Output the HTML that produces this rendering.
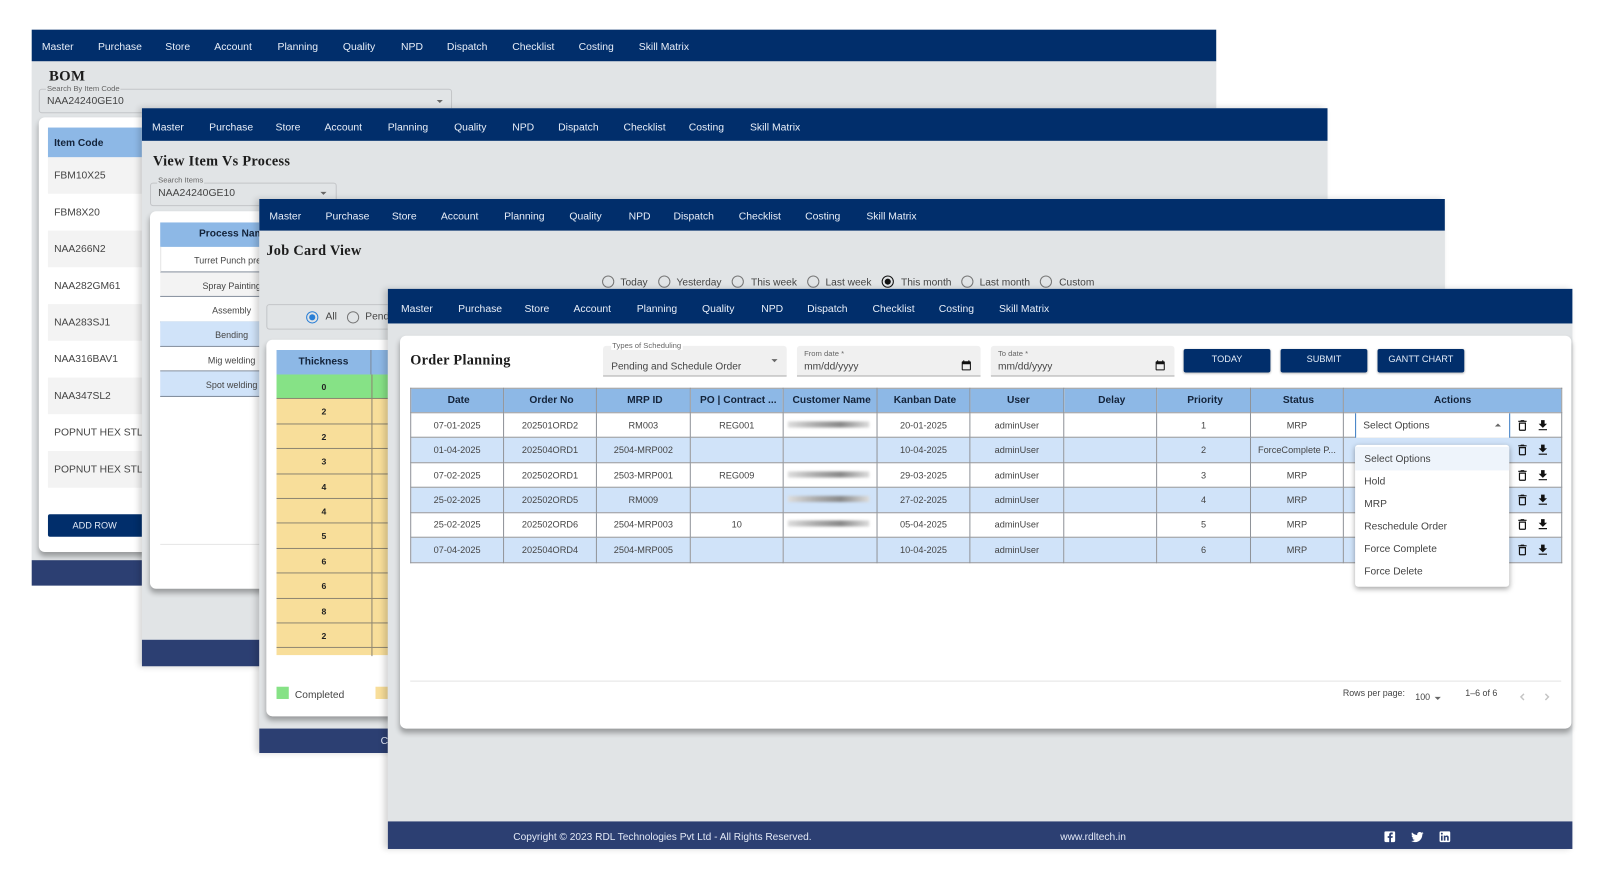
<!DOCTYPE html>
<html><head><meta charset="utf-8"><title>Order Planning</title>
<style>
*{box-sizing:border-box}
html,body{margin:0;padding:0;width:1600px;height:886px;overflow:hidden;background:#fff}
body{font-family:"Liberation Sans",sans-serif;color:#333}
#root{position:absolute;left:0;top:0;width:1568px;height:868.3px;transform:scale(1.0204);transform-origin:0 0;filter:blur(.25px)}
.a{position:absolute;white-space:nowrap;line-height:1}
.win{position:absolute;background:#e1e4e6;overflow:hidden;box-shadow:-3px 0 6px rgba(0,0,0,.18)}
.nav{position:absolute;left:0;top:0;right:0;background:#012e6b}
.nav span{position:absolute;color:#e8eef8;font-size:10.2px;line-height:1;white-space:nowrap}
.nav .i1{left:10px}.nav .i2{left:65px}.nav .i3{left:131px}.nav .i4{left:179px}.nav .i5{left:241px}.nav .i6{left:305px}.nav .i7{left:362px}.nav .i8{left:407px}.nav .i9{left:471px}.nav .i10{left:536px}.nav .i11{left:595px}
.foot{position:absolute;left:0;right:0;background:#2c3f72}
.card{position:absolute;background:#fff;border-radius:6px;box-shadow:0 4px 5px rgba(0,0,0,.32);overflow:hidden}
.ttl{position:absolute;font-family:"Liberation Serif",serif;font-weight:bold;color:#1c1c1c;white-space:nowrap;line-height:1}
.out{position:absolute;border:1px solid #c3c5c8;border-radius:3px}
.lab{position:absolute;font-size:7.5px;color:#666;line-height:1;white-space:nowrap;background:#e1e4e6;padding:0 1px}
.arr{position:absolute;width:0;height:0;border-left:3px solid transparent;border-right:3px solid transparent;border-top:3px solid #666}
.rad{position:absolute;width:12px;height:12px;border:1.2px solid #777;border-radius:50%}
.rl{position:absolute;font-size:10px;line-height:1;color:#444;white-space:nowrap}
.fld{position:absolute;background:#f0f0f0;border-bottom:1px solid #a9a9a9;border-radius:3px 3px 0 0}
.btn{position:absolute;top:342px;height:23px;background:#012e6b;color:#e4ecf8;font-size:9px;line-height:21px;text-align:center;border-radius:2px;box-shadow:0 1px 2px rgba(0,0,0,.3)}
table{border-collapse:collapse;table-layout:fixed;position:absolute}
#ot td,#ot th{border:1px solid #8f9399;height:24.45px;padding:0;text-align:center;font-size:9px;color:#444;white-space:nowrap;overflow:hidden}
#ot th{background:#8db8e6;font-size:10px;color:#13233a;font-weight:bold;padding-left:3px}
#ot th:last-child{padding-left:0}
#ot tr.b td{background:#d0e3f9}
.blr{position:absolute;height:6px;width:80px;background:linear-gradient(90deg,#ddd,#aaa 35%,#888 65%,#ddd);filter:blur(1.2px)}
.ic{position:absolute;width:14px;height:14px;fill:#111}
.tt{position:absolute;left:271px;width:240px;height:24.4px;background:#f8de9a;border-bottom:1px solid #8c8470;font-size:8.5px;font-weight:bold;color:#222}
.tt b{position:absolute;left:0;width:93px;text-align:center;top:8px;line-height:1}
.tt i{position:absolute;left:93px;top:0;bottom:-1px;width:1px;background:#8c8470}
.r1{position:absolute;left:47px;width:100px;height:36px;font-size:10.1px;color:#444;padding-left:6px;line-height:38px;white-space:nowrap}
.r2{position:absolute;left:157px;width:140px;height:24.5px;border-bottom:1px solid #7f8a99;font-size:8.8px;text-align:center;line-height:26px;color:#444}
.mi{position:absolute;left:1337px;font-size:10px;color:#444;line-height:1;white-space:nowrap}
</style></head>
<body><div id="root">
<svg width="0" height="0" style="position:absolute"><defs>
<symbol id="tr" viewBox="0 0 24 24"><path d="M6 19c0 1.1.9 2 2 2h8c1.1 0 2-.9 2-2V7H6v12zM8 9h8v10H8V9zm7.5-5l-1-1h-5l-1 1H5v2h14V4z"/></symbol>
<symbol id="dl" viewBox="0 0 24 24"><path d="M19 9h-4V3H9v6H5l7 7 7-7zM5 18v2h14v-2H5z"/></symbol>
<symbol id="cal" viewBox="0 0 24 24"><path d="M19 4h-1V2h-2v2H8V2H6v2H5c-1.1 0-2 .9-2 2v14c0 1.1.9 2 2 2h14c1.1 0 2-.9 2-2V6c0-1.1-.9-2-2-2zm0 16H5V10h14v10z"/></symbol>
</defs></svg>

<!-- Window 1 -->
<div class="win" style="left:31px;top:29px;width:1161px;height:545px;box-shadow:none">
<div class="nav" style="height:31px"><span class="i1" style="top:13px">Master</span><span class="i2" style="top:13px">Purchase</span><span class="i3" style="top:13px">Store</span><span class="i4" style="top:13px">Account</span><span class="i5" style="top:13px">Planning</span><span class="i6" style="top:13px">Quality</span><span class="i7" style="top:13px">NPD</span><span class="i8" style="top:13px">Dispatch</span><span class="i9" style="top:13px">Checklist</span><span class="i10" style="top:13px">Costing</span><span class="i11" style="top:13px">Skill Matrix</span></div>
<div class="foot" style="top:520px;height:25px"></div>
</div>
<div class="ttl" style="left:48px;top:68px;font-size:14.5px;letter-spacing:.3px">BOM</div>
<div class="out" style="left:38px;top:87px;width:405px;height:24px"></div>
<div class="lab" style="left:45px;top:83px">Search By Item Code</div>
<div class="a" style="left:46px;top:95px;font-size:10.2px;color:#444">NAA24240GE10</div>
<div class="arr" style="left:428px;top:98px"></div>
<div class="card" style="left:38px;top:115px;width:300px;height:426px"></div>
<div class="a" style="left:47px;top:125px;width:100px;height:30px;background:#8db8e6;font-size:10px;font-weight:bold;color:#13233a;line-height:31px;padding-left:6px">Item Code</div>
<div class="r1" style="top:154px;background:#f3f3f3">FBM10X25</div>
<div class="r1" style="top:190px;background:#fff">FBM8X20</div>
<div class="r1" style="top:226px;background:#f3f3f3">NAA266N2</div>
<div class="r1" style="top:262px;background:#fff">NAA282GM61</div>
<div class="r1" style="top:298px;background:#f3f3f3">NAA283SJ1</div>
<div class="r1" style="top:334px;background:#fff">NAA316BAV1</div>
<div class="r1" style="top:370px;background:#f3f3f3">NAA347SL2</div>
<div class="r1" style="top:406px;background:#fff">POPNUT HEX STL</div>
<div class="r1" style="top:442px;background:#f3f3f3">POPNUT HEX STL</div>
<div class="a" style="left:47px;top:504px;width:100px;height:22px;background:#012e6b;color:#e4ecf8;font-size:9px;line-height:22px;padding-left:24px;border-radius:2px">ADD ROW</div>

<!-- Window 2 -->
<div class="win" style="left:139px;top:106px;width:1162px;height:547px">
<div class="nav" style="height:32px"><span class="i1" style="top:15px">Master</span><span class="i2" style="top:15px;left:66px">Purchase</span><span class="i3" style="top:15px">Store</span><span class="i4" style="top:15px">Account</span><span class="i5" style="top:15px">Planning</span><span class="i6" style="top:15px;left:306px">Quality</span><span class="i7" style="top:15px;left:363px">NPD</span><span class="i8" style="top:15px;left:408px">Dispatch</span><span class="i9" style="top:15px;left:472px">Checklist</span><span class="i10" style="top:15px">Costing</span><span class="i11" style="top:15px;left:596px">Skill Matrix</span></div>
<div class="foot" style="top:521px;height:26px"></div>
</div>
<div class="ttl" style="left:150px;top:152px;font-size:14px;letter-spacing:.3px">View Item Vs Process</div>
<div class="out" style="left:147px;top:179px;width:183px;height:23px"></div>
<div class="lab" style="left:154px;top:173px">Search Items</div>
<div class="a" style="left:155px;top:185px;font-size:10.2px;color:#444">NAA24240GE10</div>
<div class="arr" style="left:314px;top:188px"></div>
<div class="card" style="left:147px;top:207px;width:200px;height:370px"></div>
<div class="a" style="left:157px;top:218px;width:140px;height:24px;background:#8db8e6;font-size:10px;font-weight:bold;color:#13233a;line-height:24px;padding-left:38px">Process Name</div>
<div class="r2" style="top:242px;background:#fff;border-left:1px solid #e5e5e5">Turret Punch press</div>
<div class="r2" style="top:266.5px;background:#f3f3f3">Spray Painting</div>
<div class="r2" style="top:291px;background:#fff">Assembly</div>
<div class="r2" style="top:315px;background:#d0e3f9">Bending</div>
<div class="r2" style="top:339.5px;background:#fff">Mig welding</div>
<div class="r2" style="top:364px;background:#d0e3f9">Spot welding</div>
<div class="a" style="left:157px;top:533px;width:140px;height:1px;background:#e6e6e6"></div>

<!-- Window 3 -->
<div class="win" style="left:254px;top:195px;width:1162px;height:543px">
<div class="nav" style="height:31px"><span class="i1" style="top:13px">Master</span><span class="i2" style="top:13px">Purchase</span><span class="i3" style="top:13px;left:130px">Store</span><span class="i4" style="top:13px;left:178px">Account</span><span class="i5" style="top:13px;left:240px">Planning</span><span class="i6" style="top:13px;left:304px">Quality</span><span class="i7" style="top:13px">NPD</span><span class="i8" style="top:13px;left:406px">Dispatch</span><span class="i9" style="top:13px;left:470px">Checklist</span><span class="i10" style="top:13px;left:535px">Costing</span><span class="i11" style="top:13px">Skill Matrix</span></div>
<div class="foot" style="top:519px;height:24px"><span style="position:absolute;left:119px;top:8px;font-size:10px;line-height:1;color:#e3e9f6;white-space:nowrap">Copyright</span></div>
</div>
<div class="ttl" style="left:261px;top:240px;font-size:14px;letter-spacing:.3px">Job Card View</div>
<div class="rad" style="left:590px;top:270px"></div><div class="rl" style="left:608px;top:273px">Today</div>
<div class="rad" style="left:645px;top:270px"></div><div class="rl" style="left:663px;top:273px">Yesterday</div>
<div class="rad" style="left:717px;top:270px"></div><div class="rl" style="left:736px;top:273px">This week</div>
<div class="rad" style="left:791px;top:270px"></div><div class="rl" style="left:809px;top:273px">Last week</div>
<div class="rad" style="left:864px;top:270px;border-color:#111"><div style="position:absolute;left:2px;top:2px;width:6px;height:6px;border-radius:50%;background:#111"></div></div><div class="rl" style="left:883px;top:273px">This month</div>
<div class="rad" style="left:942px;top:270px"></div><div class="rl" style="left:960px;top:273px">Last month</div>
<div class="rad" style="left:1019px;top:270px"></div><div class="rl" style="left:1038px;top:273px">Custom</div>
<div class="out" style="left:261px;top:298px;width:140px;height:25px"></div>
<div class="rad" style="left:300px;top:305px;border-color:#2a7fd6"><div style="position:absolute;left:2px;top:2px;width:6px;height:6px;border-radius:50%;background:#2a7fd6"></div></div>
<div class="rl" style="left:319px;top:306px">All</div>
<div class="rad" style="left:340px;top:305px"></div>
<div class="rl" style="left:358px;top:306px">Pending</div>
<div class="card" style="left:261px;top:333px;width:200px;height:369px"></div>
<div class="a" style="left:271px;top:343px;width:240px;height:24px;background:#8db8e6"></div>
<div class="a" style="left:271px;top:343px;width:93px;height:24px;font-size:10px;font-weight:bold;color:#13233a;text-align:center;line-height:23px;border-right:1px solid #7f8a99">Thickness</div>
<div class="tt" style="top:367px;background:#86e286"><b>0</b><i></i></div>
<div class="tt" style="top:391.4px"><b>2</b><i></i></div>
<div class="tt" style="top:415.8px"><b>2</b><i></i></div>
<div class="tt" style="top:440.2px"><b>3</b><i></i></div>
<div class="tt" style="top:464.6px"><b>4</b><i></i></div>
<div class="tt" style="top:489px"><b>4</b><i></i></div>
<div class="tt" style="top:513.4px"><b>5</b><i></i></div>
<div class="tt" style="top:537.8px"><b>6</b><i></i></div>
<div class="tt" style="top:562.2px"><b>6</b><i></i></div>
<div class="tt" style="top:586.6px"><b>8</b><i></i></div>
<div class="tt" style="top:611px"><b>2</b><i></i></div>
<div class="tt" style="top:635.4px;height:6.6px;border-bottom:0"><i></i></div>
<div class="a" style="left:271px;top:673px;width:12px;height:12px;background:#86e286"></div>
<div class="a" style="left:289px;top:677px;font-size:10px;color:#444">Completed</div>
<div class="a" style="left:368px;top:673px;width:12px;height:12px;background:#f8de9a"></div>

<!-- Window 4 -->
<div class="win" style="left:380px;top:283px;width:1161px;height:549px">
<div class="nav" style="height:34px;left:0"><span style="top:16px;left:13px">Master</span><span style="top:16px;left:69px">Purchase</span><span style="top:16px;left:134px">Store</span><span style="top:16px;left:182px">Account</span><span style="top:16px;left:244px">Planning</span><span style="top:16px;left:308px">Quality</span><span style="top:16px;left:366px">NPD</span><span style="top:16px;left:411px">Dispatch</span><span style="top:16px;left:475px">Checklist</span><span style="top:16px;left:540px">Costing</span><span style="top:16px;left:599px">Skill Matrix</span></div>
<div class="foot" style="top:522px;height:27px"></div>
</div>
<div class="card" style="left:392px;top:329px;width:1148px;height:385px"></div>
<div class="ttl" style="left:402px;top:347px;font-size:14px;letter-spacing:.3px">Order Planning</div>

<div class="fld" style="left:591px;top:339px;width:180px;height:30px"></div>
<div class="a" style="left:599px;top:335px;font-size:7.5px;color:#666;background:#fff;padding:0 1px">Types of Scheduling</div>
<div class="a" style="left:599px;top:355px;font-size:9.9px;color:#444">Pending and Schedule Order</div>
<div class="arr" style="left:756px;top:352px"></div>
<div class="fld" style="left:781px;top:339px;width:180px;height:30px"></div>
<div class="a" style="left:788px;top:343px;font-size:7.5px;color:#666">From date *</div>
<div class="a" style="left:788px;top:355px;font-size:10px;color:#444">mm/dd/yyyy</div>
<svg class="ic" style="left:941px;top:352px;width:12px;height:12px"><use href="#cal"/></svg>
<div class="fld" style="left:971px;top:339px;width:180px;height:30px"></div>
<div class="a" style="left:978px;top:343px;font-size:7.5px;color:#666">To date *</div>
<div class="a" style="left:978px;top:355px;font-size:10px;color:#444">mm/dd/yyyy</div>
<svg class="ic" style="left:1131px;top:352px;width:12px;height:12px"><use href="#cal"/></svg>
<div class="btn" style="left:1160px;width:85px">TODAY</div>
<div class="btn" style="left:1255px;width:85px">SUBMIT</div>
<div class="btn" style="left:1350px;width:85px">GANTT CHART</div>

<table id="ot" style="left:402px;top:379.5px;width:1128px">
<colgroup><col style="width:91px"><col style="width:91px"><col style="width:92px"><col style="width:91px"><col style="width:92px"><col style="width:91px"><col style="width:92px"><col style="width:91px"><col style="width:92px"><col style="width:91px"><col style="width:214px"></colgroup>
<tr><th>Date</th><th>Order No</th><th>MRP ID</th><th>PO | Contract ...</th><th>Customer Name</th><th>Kanban Date</th><th>User</th><th>Delay</th><th>Priority</th><th>Status</th><th>Actions</th></tr>
<tr><td>07-01-2025</td><td>202501ORD2</td><td>RM003</td><td>REG001</td><td></td><td>20-01-2025</td><td>adminUser</td><td></td><td>1</td><td>MRP</td><td></td></tr>
<tr class="b"><td>01-04-2025</td><td>202504ORD1</td><td>2504-MRP002</td><td></td><td></td><td>10-04-2025</td><td>adminUser</td><td></td><td>2</td><td>ForceComplete P...</td><td></td></tr>
<tr><td>07-02-2025</td><td>202502ORD1</td><td>2503-MRP001</td><td>REG009</td><td></td><td>29-03-2025</td><td>adminUser</td><td></td><td>3</td><td>MRP</td><td></td></tr>
<tr class="b"><td>25-02-2025</td><td>202502ORD5</td><td>RM009</td><td></td><td></td><td>27-02-2025</td><td>adminUser</td><td></td><td>4</td><td>MRP</td><td></td></tr>
<tr><td>25-02-2025</td><td>202502ORD6</td><td>2504-MRP003</td><td>10</td><td></td><td>05-04-2025</td><td>adminUser</td><td></td><td>5</td><td>MRP</td><td></td></tr>
<tr class="b"><td>07-04-2025</td><td>202504ORD4</td><td>2504-MRP005</td><td></td><td></td><td>10-04-2025</td><td>adminUser</td><td></td><td>6</td><td>MRP</td><td></td></tr>
</table>
<div class="blr" style="left:772px;top:413px"></div>
<div class="blr" style="left:772px;top:462px"></div>
<div class="blr" style="left:772px;top:486px"></div>
<div class="blr" style="left:772px;top:510px"></div>

<div class="a" style="left:1328px;top:405px;width:152px;height:24px;background:#fff;border-left:1px solid #3a7cc4;border-right:1px solid #3a7cc4"></div>
<div class="a" style="left:1336px;top:413px;font-size:10px;color:#444">Select Options</div>
<div class="arr" style="left:1465px;top:415px;border-top:0;border-bottom:3px solid #666"></div>
<svg class="ic" style="left:1485px;top:409.5px"><use href="#tr"/></svg><svg class="ic" style="left:1505px;top:409.5px"><use href="#dl"/></svg>
<svg class="ic" style="left:1485px;top:434px"><use href="#tr"/></svg><svg class="ic" style="left:1505px;top:434px"><use href="#dl"/></svg>
<svg class="ic" style="left:1485px;top:458.5px"><use href="#tr"/></svg><svg class="ic" style="left:1505px;top:458.5px"><use href="#dl"/></svg>
<svg class="ic" style="left:1485px;top:483px"><use href="#tr"/></svg><svg class="ic" style="left:1505px;top:483px"><use href="#dl"/></svg>
<svg class="ic" style="left:1485px;top:507px"><use href="#tr"/></svg><svg class="ic" style="left:1505px;top:507px"><use href="#dl"/></svg>
<svg class="ic" style="left:1485px;top:531.5px"><use href="#tr"/></svg><svg class="ic" style="left:1505px;top:531.5px"><use href="#dl"/></svg>

<div class="a" style="left:1328px;top:436px;width:151px;height:139px;background:#fff;border-radius:3px;box-shadow:0 2px 5px rgba(0,0,0,.35)"></div>
<div class="a" style="left:1328px;top:438px;width:151px;height:23px;background:#eef4fb"></div>
<div class="mi" style="top:446px">Select Options</div>
<div class="mi" style="top:468px">Hold</div>
<div class="mi" style="top:490px">MRP</div>
<div class="mi" style="top:512px">Reschedule Order</div>
<div class="mi" style="top:534px">Force Complete</div>
<div class="mi" style="top:556px">Force Delete</div>

<div class="a" style="left:402px;top:667px;width:1128px;height:1px;background:#e4e4e4"></div>
<div class="a" style="left:1316px;top:675px;font-size:8.7px;color:#444">Rows per page:</div>
<div class="a" style="left:1387px;top:679px;font-size:8.7px;color:#444">100</div>
<div class="arr" style="left:1406px;top:683px"></div>
<div class="a" style="left:1436px;top:675px;font-size:8.7px;color:#444">1–6 of 6</div>
<svg style="position:absolute;left:1487px;top:678px" width="10" height="10" viewBox="0 0 10 10"><path d="M6.5 2 3.5 5l3 3" fill="none" stroke="#c4c4c4" stroke-width="1.4"/></svg>
<svg style="position:absolute;left:1511px;top:678px" width="10" height="10" viewBox="0 0 10 10"><path d="M3.5 2l3 3-3 3" fill="none" stroke="#c4c4c4" stroke-width="1.4"/></svg>

<div class="a" style="left:503px;top:816px;font-size:9.95px;color:#e3e9f6">Copyright © 2023 RDL Technologies Pvt Ltd - All Rights Reserved.</div>
<div class="a" style="left:1039px;top:816px;font-size:10px;color:#e3e9f6">www.rdltech.in</div>
<svg style="position:absolute;left:1355px;top:813px" width="14" height="14" viewBox="0 0 24 24" fill="#fff"><path d="M5 3h14a2 2 0 0 1 2 2v14a2 2 0 0 1-2 2h-5v-7h2.5l.5-3h-3V9.5c0-.8.4-1.5 1.5-1.5H17V5.2c-.4 0-1.3-.2-2.4-.2-2.4 0-3.6 1.5-3.6 4v2H8.5v3H11v7H5a2 2 0 0 1-2-2V5a2 2 0 0 1 2-2z"/></svg>
<svg style="position:absolute;left:1382px;top:813px" width="14" height="14" viewBox="0 0 24 24" fill="#fff"><path d="M22.46 6c-.77.35-1.6.58-2.46.69.88-.53 1.56-1.37 1.88-2.38-.83.5-1.75.85-2.72 1.05C18.37 4.5 17.26 4 16 4c-2.35 0-4.27 1.92-4.27 4.29 0 .34.04.67.11.98C8.28 9.09 5.11 7.38 3 4.79c-.37.63-.58 1.37-.58 2.15 0 1.49.75 2.81 1.91 3.56-.71 0-1.37-.2-1.95-.5v.03c0 2.08 1.48 3.82 3.44 4.21a4.22 4.22 0 0 1-1.93.07 4.28 4.28 0 0 0 4 2.98 8.521 8.521 0 0 1-5.33 1.84c-.34 0-.68-.02-1.02-.06C3.44 20.29 5.7 21 8.12 21 16 21 20.33 14.46 20.33 8.79c0-.19 0-.37-.01-.56.84-.6 1.56-1.36 2.14-2.23z"/></svg>
<svg style="position:absolute;left:1409px;top:813px" width="14" height="14" viewBox="0 0 24 24" fill="#fff"><path d="M19 3a2 2 0 0 1 2 2v14a2 2 0 0 1-2 2H5a2 2 0 0 1-2-2V5a2 2 0 0 1 2-2h14m-.5 15.5v-5.3a3.26 3.26 0 0 0-3.26-3.26c-.85 0-1.84.52-2.32 1.3v-1.11h-2.79v8.37h2.79v-4.93c0-.77.62-1.4 1.39-1.4a1.4 1.4 0 0 1 1.4 1.4v4.93h2.79M6.88 8.56a1.68 1.68 0 0 0 1.68-1.68c0-.93-.75-1.69-1.68-1.69a1.69 1.69 0 0 0-1.69 1.69c0 .93.76 1.68 1.69 1.68m1.39 9.94v-8.37H5.5v8.37h2.77z"/></svg>
</div></body></html>
